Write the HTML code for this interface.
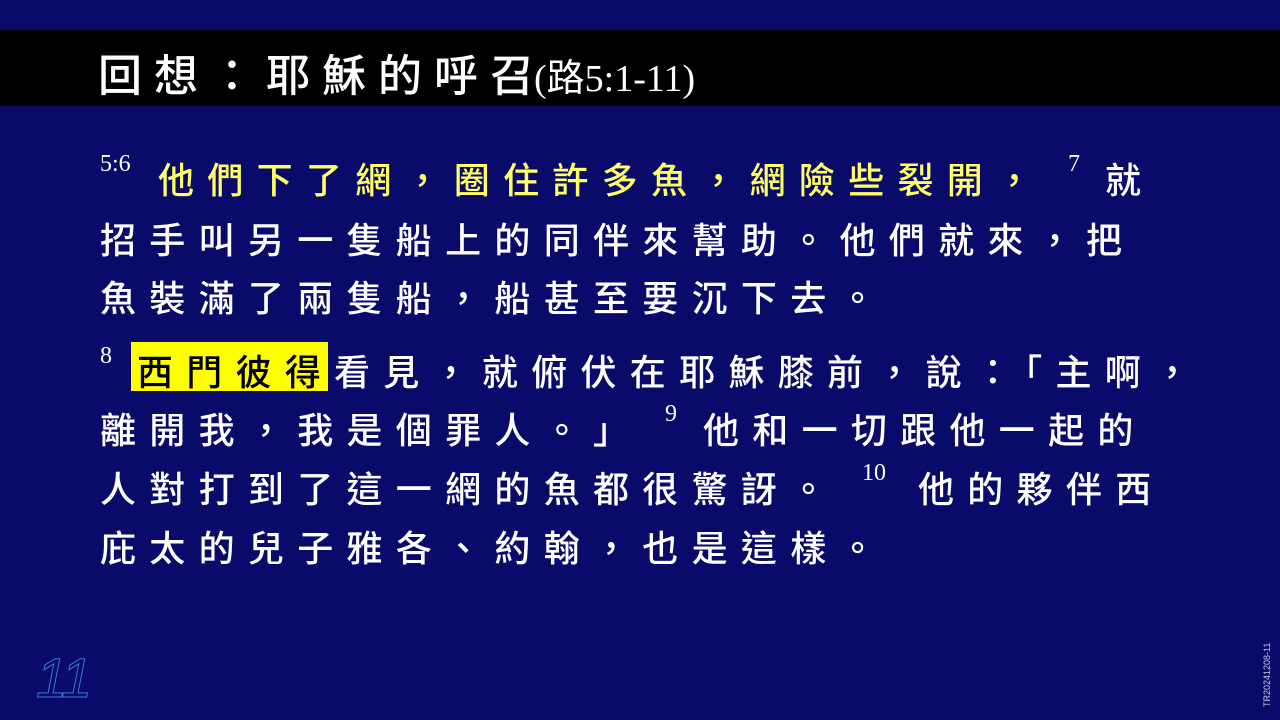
<!DOCTYPE html>
<html><head><meta charset="utf-8"><style>
html,body{margin:0;padding:0}
body{width:1280px;height:720px;background:#0a0a6b;position:relative;overflow:hidden;font-family:"Liberation Serif","Noto Serif CJK SC","Noto Sans CJK TC",serif;color:#fff}
.bar{position:absolute;left:0;top:30px;width:1280px;height:76px;background:#000}
.t{position:absolute;left:98px;top:44px;font-size:44px;line-height:56px;letter-spacing:12px;white-space:nowrap;font-family:"Noto Sans CJK TC",sans-serif;font-weight:500}
.t span{font-family:"Liberation Serif","Noto Sans CJK TC",serif;font-size:38px;letter-spacing:0;font-weight:400}
.l{position:absolute;font-size:36px;line-height:50px;letter-spacing:13.3px;white-space:nowrap;font-family:"Noto Sans CJK TC",sans-serif;font-weight:500}
.s{position:absolute;font-family:"Liberation Serif",serif;font-size:24px;line-height:24px}
.y{color:#ffff66}
.hl{position:absolute;left:131px;top:342px;width:197px;height:49px;background:#ffff00}
</style></head><body>
<div class="bar"></div>
<div class="t">回想：耶穌的呼<span style="font-family:'Noto Sans CJK TC',sans-serif;font-size:44px;font-weight:500">召</span><span>(路5:1-11)</span></div>

<div class="s" style="left:100px;top:152px">5:6</div>
<div class="l y" style="left:158px;top:153px">他們下了網，圈住許多魚，網險些裂開，</div>
<div class="s" style="left:1068px;top:152px">7</div>
<div class="l" style="left:1105px;top:153px">就</div>
<div class="l" style="left:100px;top:213px">招手叫另一隻船上的同伴來幫助。他們就來，把</div>
<div class="l" style="left:100px;top:271px">魚裝滿了兩隻船，船甚至要沉下去。</div>

<div class="s" style="left:100px;top:344px">8</div>
<div class="hl"></div>
<div class="l" style="left:137px;top:345px;color:#000">西門彼得</div>
<div class="l" style="left:334px;top:345px">看見，就俯伏在耶穌膝前，說：「主啊，</div>
<div class="l" style="left:100px;top:403px">離開我，我是個罪人。」</div>
<div class="s" style="left:665px;top:402px">9</div>
<div class="l" style="left:703px;top:403px">他和一切跟他一起的</div>
<div class="l" style="left:100px;top:462px">人對打到了這一網的魚都很驚訝。</div>
<div class="s" style="left:862px;top:461px">10</div>
<div class="l" style="left:918px;top:462px">他的夥伴西</div>
<div class="l" style="left:100px;top:521px">庇太的兒子雅各、約翰，也是這樣。</div>

<div style="position:absolute;left:36px;top:648px;font-family:'Liberation Sans',sans-serif;font-style:italic;font-size:56px;line-height:60px;color:transparent;-webkit-text-stroke:1px #3a7ad0;letter-spacing:-2px">11</div>
<div style="position:absolute;left:1262px;top:707px;transform:rotate(-90deg);transform-origin:0 0;font-family:'Liberation Sans',sans-serif;font-size:9px;color:#c8c8e8;white-space:nowrap">TR20241208-11</div>
</body></html>
